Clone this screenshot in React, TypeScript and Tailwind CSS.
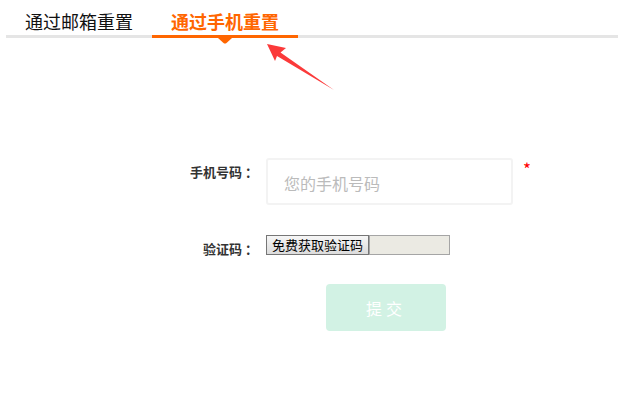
import * as React from "react";

const cjk = '"Noto Sans CJK SC", "Noto Sans", sans-serif';

/* ----------------------------- Tabs ----------------------------- */

function Tabs() {
  return (
    <div className="relative ml-[6px] flex h-[38px] border-b-[3px] border-[#e5e5e5]">
      <div className="flex h-[35px] w-[146px] justify-center pt-[10px] text-[18px] leading-[22px] text-[#111]">
        通过邮箱重置
      </div>
      <div className="relative -mb-[3px] flex h-[38px] w-[146px] justify-center border-b-[3px] border-[#ff6600] pt-[10px] text-[18px] font-bold leading-[22px] text-[#ff6600]">
        通过手机重置
        <svg
          className="absolute left-[66px] top-[38px]"
          width="14"
          height="6"
          viewBox="0 0 14 6"
        >
          <path d="M0 0 H14 L8.5 5 Q7 6 5.5 5 Z" fill="#ff6600" />
        </svg>
      </div>
    </div>
  );
}

/* ----------------------------- Page ----------------------------- */

export default function App() {
  return (
    <div
      className="relative h-[415px] w-[618px] overflow-hidden bg-white"
      style={{ fontFamily: cjk }}
    >
      <Tabs />

      {/* annotation arrow */}
      <svg
        className="absolute left-[260px] top-[38px]"
        width="80"
        height="56"
        viewBox="0 0 80 56"
      >
        <polygon
          points="7,6 26,10 20.5,14.5 74,52 17,18 15,23"
          fill="#fb3a3a"
        />
      </svg>

      <div className="mt-[120px] flex flex-col">
        {/* phone */}
        <div className="flex items-start">
          <div className="w-[258px] pt-[4px] text-right text-[13px] font-bold leading-[20px] text-[#333]">
            手机号码 ：
          </div>
          <div className="ml-[8px] flex h-[47px] w-[247px] items-center rounded-[3px] border-2 border-[#f3f3f3] px-[16px] text-[16px] text-[#bbb]">
            <span className="pt-[3px] leading-[20px]">您的手机号码</span>
          </div>
          <span className="ml-[10px] pt-[3px] text-[17px] leading-[16px] text-[#ff0000]">
            *
          </span>
        </div>

        {/* code */}
        <div className="mt-[30px] flex h-[20px] items-start">
          <div className="w-[258px] pt-[4px] text-right text-[13px] font-bold leading-[20px] text-[#333]">
            验证码 ：
          </div>
          <div className="ml-[8px] flex h-[20px]">
            <button className="h-[20px] w-[103px] border border-[#767676] bg-gradient-to-b from-[#f6f6f6] to-[#dcdcdc] text-[13px] leading-[18px] text-black">
              免费获取验证码
            </button>
            <div className="h-[20px] w-[81px] border border-[#a5a5a5] bg-[#ebeae3]" />
          </div>
        </div>

        {/* submit */}
        <div className="ml-[326px] mt-[29px]">
          <button className="flex h-[47px] w-[120px] items-center justify-center rounded-[4px] bg-[#d2f2e4] text-[16px] tracking-[4px] text-white">
            提交
          </button>
        </div>
      </div>
    </div>
  );
}
